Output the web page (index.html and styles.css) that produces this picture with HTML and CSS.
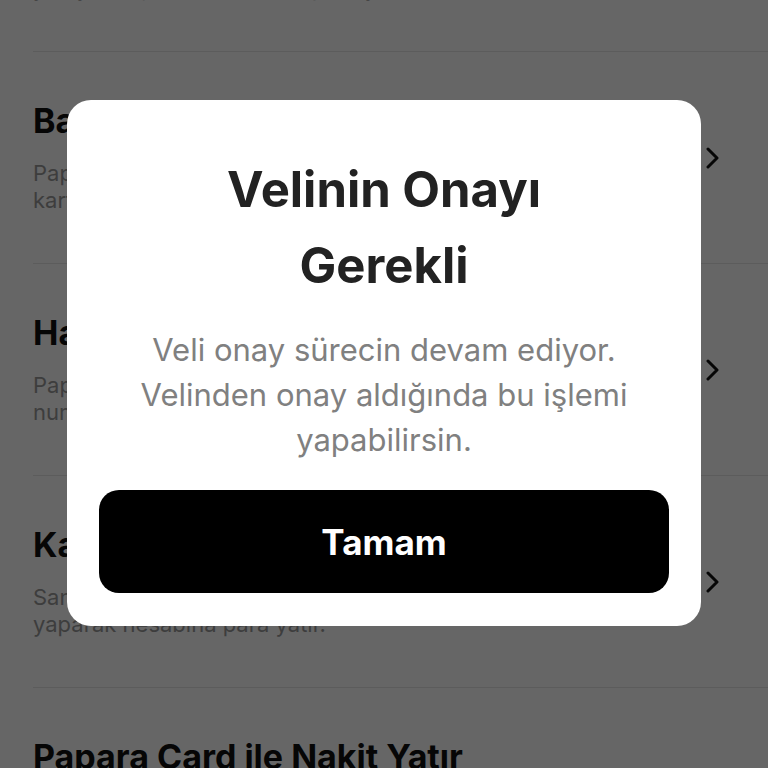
FILE: index.html
```html
<!DOCTYPE html>
<html>

<head lang="tr">
    <meta charset="UTF-8">
    <title>Para Yatır</title>
    <link rel="stylesheet" href="styles.css">
</head>

<body>
    <div class="list">
        <div class="list-item">
            <div class="item-text">
                <h3 class="item-title">Papara Noktalarından Yatır</h3>
                <p class="item-desc">Sana en yakın Papara noktasını bul ve<br>yüz yüze işlemle hesabına para yatır.</p>
            </div>
            <span class="chevron"><svg width="14" height="22" viewBox="0 0 14 22"><path d="M2 2 L11 11 L2 20" fill="none" stroke="#111" stroke-width="3" stroke-linecap="round" stroke-linejoin="round"/></svg></span>
        </div>
        <div class="list-item">
            <div class="item-text">
                <h3 class="item-title">Banka Kartı ile Yatır</h3>
                <p class="item-desc">Papara hesabına anında para yatırmak için<br>kartını kullan ve bakiyeni yükle.</p>
            </div>
            <span class="chevron"><svg width="14" height="22" viewBox="0 0 14 22"><path d="M2 2 L11 11 L2 20" fill="none" stroke="#111" stroke-width="3" stroke-linecap="round" stroke-linejoin="round"/></svg></span>
        </div>
        <div class="list-item">
            <div class="item-text">
                <h3 class="item-title">Havale / EFT ile Yatır</h3>
                <p class="item-desc">Papara IBAN bilgilerini veya Papara<br>numaranı kullanarak para gönder.</p>
            </div>
            <span class="chevron"><svg width="14" height="22" viewBox="0 0 14 22"><path d="M2 2 L11 11 L2 20" fill="none" stroke="#111" stroke-width="3" stroke-linecap="round" stroke-linejoin="round"/></svg></span>
        </div>
        <div class="list-item">
            <div class="item-text">
                <h3 class="item-title">Karekod ile ATM'den Yatır</h3>
                <p class="item-desc">Sana özel karekodu okutarak ATM'den işlem<br>yaparak hesabına para yatır.</p>
            </div>
            <span class="chevron"><svg width="14" height="22" viewBox="0 0 14 22"><path d="M2 2 L11 11 L2 20" fill="none" stroke="#111" stroke-width="3" stroke-linecap="round" stroke-linejoin="round"/></svg></span>
        </div>
        <div class="list-item">
            <div class="item-text">
                <h3 class="item-title">Papara Card ile Nakit Yatır</h3>
                <p class="item-desc">Papara Card ile anlaşmalı ATM'lerden<br>nakit para yatır.</p>
            </div>
            <span class="chevron"><svg width="14" height="22" viewBox="0 0 14 22"><path d="M2 2 L11 11 L2 20" fill="none" stroke="#111" stroke-width="3" stroke-linecap="round" stroke-linejoin="round"/></svg></span>
        </div>
    </div>

    <!-- karartma + uyarı -->
    <div class="overlay">
        <div class="dialog">
            <h2 class="dialog-title">Velinin Onayı<br>Gerekli</h2>
            <p class="dialog-text">Veli onay sürecin devam ediyor. Velinden onay aldığında bu işlemi yapabilirsin.</p>
            <a href="javascript:void(0);" class="dialog-button">Tamam</a>
        </div>
    </div>
</body>

</html>
```

FILE: styles.css
```css
html,
body,
div,
p,
h2,
h3,
a {
    margin: 0px;
    padding: 0px;
}

body {
    background: #ffffff;
    font-family: Inter, "Noto Sans", sans-serif;
    overflow: hidden;
    height: 768px;
}

.list {
    margin-top: -160px;
    padding-left: 33px;
}

.list-item {
    display: flex;
    align-items: center;
    justify-content: space-between;
    height: 211px;
    border-bottom: 1px solid #e6e6e6;
    padding-right: 48px;
}

.item-title {
    font-size: 34px;
    font-weight: 700;
    line-height: 38px;
    color: #111111;
}

.item-desc {
    margin-top: 20px;
    font-size: 22px;
    line-height: 27px;
    color: #9a9a9a;
}

.chevron {
    display: flex;
}

.overlay {
    position: fixed;
    left: 0px;
    top: 0px;
    width: 100%;
    height: 100%;
    background: rgba(0, 0, 0, .6);
    display: flex;
    justify-content: center;
    align-items: flex-start;
    padding-top: 100px;
    box-sizing: border-box;
}

.dialog {
    width: 634px;
    box-sizing: border-box;
    background: #ffffff;
    border-radius: 24px;
    padding: 52px 32px 33px 32px;
    text-align: center;
}

.dialog-title {
    font-size: 49px;
    line-height: 76px;
    font-weight: 700;
    color: #222222;
}

.dialog-text {
    margin: 23px 30px 0px 30px;
    font-size: 31px;
    line-height: 45px;
    color: #808080;
}

.dialog-button {
    display: block;
    margin-top: 28px;
    height: 103px;
    line-height: 105px;
    border-radius: 20px;
    background: #000000;
    color: #ffffff;
    font-size: 35px;
    font-weight: 700;
    text-decoration: none;
}
```
